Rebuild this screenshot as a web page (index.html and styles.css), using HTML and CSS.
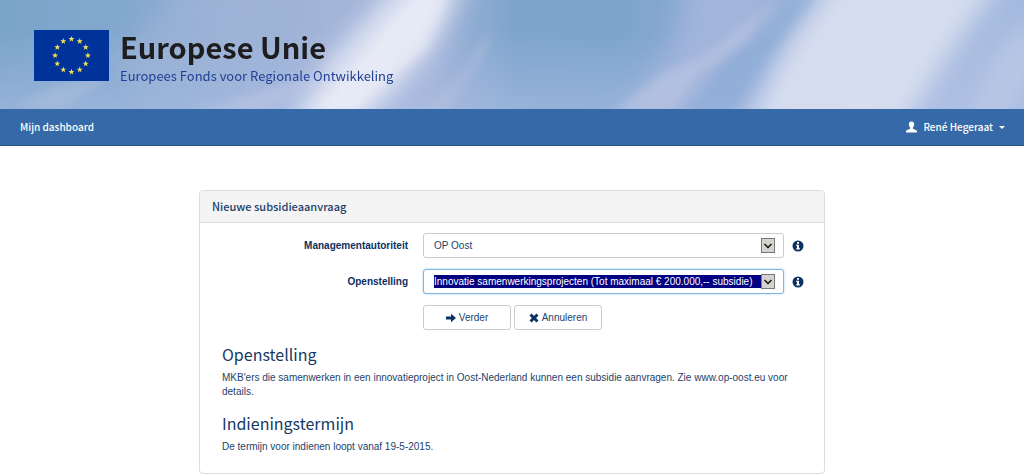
FILE: index.html
```html
<!DOCTYPE html>
<html lang="nl">
<head>
<meta charset="utf-8">
<meta name="viewport" content="width=device-width, initial-scale=1">
<title>Nieuwe subsidieaanvraag</title>
<link rel="stylesheet" href="styles.css">
</head>
<body>
<header class="banner">
  <svg class="sky" viewBox="0 0 1024 109" preserveAspectRatio="none" aria-hidden="true">
    <defs>
      <linearGradient id="base" x1="0" x2="1" y1="0" y2="0">
        <stop offset="0" stop-color="#7ba4c9"/>
        <stop offset=".12" stop-color="#83a8ce"/>
        <stop offset=".22" stop-color="#97b0d4"/>
        <stop offset=".32" stop-color="#a3b5d9"/>
        <stop offset=".42" stop-color="#a3b4d8"/>
        <stop offset=".5" stop-color="#7fa5cd"/>
        <stop offset=".6" stop-color="#7ca4cd"/>
        <stop offset=".7" stop-color="#8fabd5"/>
        <stop offset=".85" stop-color="#b3c3e2"/>
        <stop offset="1" stop-color="#a3b9df"/>
      </linearGradient>
      <linearGradient id="haze" x1="0" x2="0" y1="0" y2="1">
        <stop offset=".3" stop-color="#b0c0e6" stop-opacity="0"/>
        <stop offset="1" stop-color="#b0c0e6" stop-opacity=".5"/>
      </linearGradient>
      <filter id="soft" x="-50%" y="-50%" width="200%" height="200%"><feGaussianBlur stdDeviation="12"/></filter>
      <filter id="fine" x="-50%" y="-50%" width="200%" height="200%"><feGaussianBlur stdDeviation="5"/></filter>
    </defs>
    <rect width="1024" height="109" fill="url(#base)"/>
    <rect width="1024" height="109" fill="url(#haze)"/>
    <g filter="url(#soft)">
      <path d="M195-20H290L250 50 150 90 110 60Z" fill="#a5b6d9" opacity=".45"/>
      <path d="M400-20H465L438 40 400 85 355 130H285L330 60Z" fill="#e0e5f3" opacity=".95"/>
      <path d="M690-20H775L745 40 680 125H605L670 60Z" fill="#a9b8de" opacity=".75"/>
      <path d="M835-20H1000L950 50 900 130H745L785 50Z" fill="#d6ddef"/>
      <path d="M1035 10V70L1000 125H965L1000 50Z" fill="#b9c7e5"/>
    </g>
    <g filter="url(#fine)">
      <path d="M415-5H448L425 50 395 75 355 112H312L350 70Z" fill="#f0f2f9" opacity=".5"/>
      <path d="M494 22 484 55 445 112H425L465 70Z" fill="#b9c3df" opacity=".4"/>
      <path d="M775 0 745 42 698 75 670 112H615L660 75 705 55Z" fill="#c2cae6" opacity=".5"/>
      <path d="M787-5 768 30 728 60 685 112H735L770 55 815-5Z" fill="#86a9d5" opacity=".5"/>
      <path d="M15 105 60 85 110 75 60 112Z" fill="#b3c3df" opacity=".4"/>
      <path d="M195 112 280 86 335 75 260 112Z" fill="#c5cde6" opacity=".4"/>
    </g>
  </svg>
  <div class="brand">
    <svg class="flag" viewBox="0 0 75 51" role="img" aria-label="Vlag van de Europese Unie">
      <defs><path id="star" d="M0-3.200.75-1H3.050L1.200.38 1.900 2.580 0 1.240-1.900 2.580-1.200.38-3.050-1H-.75Z"/></defs>
      <rect width="75" height="51" fill="#039"/>
      <g fill="#ece35a">
        <use href="#star" x="37.5" y="9.1"/><use href="#star" x="45.7" y="11.3"/>
        <use href="#star" x="51.7" y="17.3"/><use href="#star" x="53.9" y="25.5"/>
        <use href="#star" x="51.7" y="33.7"/><use href="#star" x="45.7" y="39.7"/>
        <use href="#star" x="37.5" y="41.9"/><use href="#star" x="29.3" y="39.7"/>
        <use href="#star" x="23.3" y="33.7"/><use href="#star" x="21.1" y="25.5"/>
        <use href="#star" x="23.3" y="17.3"/><use href="#star" x="29.3" y="11.3"/>
      </g>
    </svg>
    <div class="brand-text">
      <div class="brand-name">Europese Unie</div>
      <div class="brand-fund">Europees Fonds voor Regionale Ontwikkeling</div>
    </div>
  </div>
</header>
<nav class="navbar">
  <a class="nav-link" href="#">Mijn dashboard</a>
  <a class="nav-link user" href="#">
    <svg class="user-icon" viewBox="0 0 12 12" aria-hidden="true"><path d="M6 0C3.900 0 3.100 1.300 3.100 3.100 3.100 4.700 3.700 5.700 4.500 6.500V8L1.300 9.300C.4 9.700 0 10.200 0 11V12H12V11C12 10.200 11.600 9.700 10.700 9.300L7.500 8V6.500C8.300 5.700 8.900 4.700 8.900 3.100 8.900 1.300 8.100 0 6 0Z" fill="currentColor"/></svg>
    <span>René Hegeraat</span>
    <span class="caret"></span>
  </a>
</nav>
<main class="panel">
  <h1 class="panel-title">Nieuwe subsidieaanvraag</h1>
  <div class="panel-body">
    <form class="form">
      <label class="label" for="authority">Managementautoriteit</label>
      <div class="picker">
        <select class="select" id="authority"><option>OP Oost</option></select>
        <svg class="arrow" viewBox="0 0 14 15" aria-hidden="true"><path d="M0 0H14V15H0Z" fill="#777"/><path d="M1 1H13V14H1Z" fill="#d6d3ce"/><path d="M3.500 6 7 9.500 10.500 6" fill="none" stroke="#111" stroke-width="1.500"/></svg>
      </div>
      <button class="info" type="button" aria-label="Informatie over managementautoriteit"><svg viewBox="0 0 12 12" aria-hidden="true"><circle cx="6" cy="6" r="5.500" fill="currentColor"/><path d="M5 2H7V3.800H5ZM4.200 4.700H7V8.300H7.900V9.600H4.200V8.300H5V6H4.200Z" fill="#fff"/></svg></button>

      <label class="label" for="call">Openstelling</label>
      <div class="picker">
        <select class="select selected" id="call"><option>Innovatie samenwerkingsprojecten (Tot maximaal € 200.000,-- subsidie)</option></select>
        <svg class="arrow" viewBox="0 0 14 15" aria-hidden="true"><path d="M0 0H14V15H0Z" fill="#777"/><path d="M1 1H13V14H1Z" fill="#d6d3ce"/><path d="M3.500 6 7 9.500 10.500 6" fill="none" stroke="#111" stroke-width="1.500"/></svg>
      </div>
      <button class="info" type="button" aria-label="Informatie over openstelling"><svg viewBox="0 0 12 12" aria-hidden="true"><circle cx="6" cy="6" r="5.500" fill="currentColor"/><path d="M5 2H7V3.800H5ZM4.200 4.700H7V8.300H7.900V9.600H4.200V8.300H5V6H4.200Z" fill="#fff"/></svg></button>

      <div class="actions">
        <button class="button" type="submit"><svg class="icon" viewBox="0 0 10 10" aria-hidden="true"><path d="M0 3.500H5V.8L10 5 5 9.200V6.500H0Z" fill="currentColor"/></svg>Verder</button>
        <button class="button" type="button"><svg class="icon" viewBox="0 0 10 10" aria-hidden="true"><path d="M2.600.5 5 2.900 7.400.5 9.500 2.600 7.100 5 9.500 7.400 7.400 9.500 5 7.100 2.600 9.500.5 7.400 2.900 5 .5 2.600Z" fill="currentColor"/></svg>Annuleren</button>
      </div>
    </form>
    <section class="topic">
      <h2 class="topic-title">Openstelling</h2>
      <p class="topic-text">MKB'ers die samenwerken in een innovatieproject in Oost-Nederland kunnen een subsidie aanvragen. Zie www.op-oost.eu voor details.</p>
    </section>
    <section class="topic">
      <h2 class="topic-title">Indieningstermijn</h2>
      <p class="topic-text">De termijn voor indienen loopt vanaf 19-5-2015.</p>
    </section>
  </div>
</main>
</body>
</html>
```
FILE: styles.css
```css
* { box-sizing: border-box; }

body {
  margin: 0;
  background: #fff;
  color: #1c3f6b;
  font: 10px/14px "Liberation Sans", Arial, sans-serif;
}

.banner {
  position: relative;
  padding: 30px 34px 19px;
  overflow: hidden;
}

.sky {
  position: absolute;
  inset: 0;
  width: 100%;
  height: 100%;
}

.brand {
  position: relative;
  display: flex;
  gap: 11px;
}

.flag { width: 75px; height: 51px; }

.brand-text { font-family: "Noto Sans CJK JP", "Noto Sans", sans-serif; }

.brand-name {
  color: #1d1d1f;
  font-size: 29px;
  font-weight: 700;
  line-height: 32px;
}

.brand-fund {
  color: #1f3f94;
  font-size: 13px;
  line-height: 28px;
}

.navbar {
  display: flex;
  justify-content: space-between;
  align-items: center;
  padding: 8px 19px 8px 20px;
  background: #3569a8;
  border-bottom: 1px solid #2b5688;
}

.nav-link {
  color: #fff;
  font: 500 10px/20px "Noto Sans CJK JP", "Noto Sans", sans-serif;
  text-decoration: none;
}

.user { display: flex; align-items: center; gap: 6px; }

.user-icon { width: 11px; height: 12px; }

.caret {
  border: 3px solid transparent;
  border-top-color: currentColor;
  border-bottom: 0;
}

.panel {
  max-width: 626px;
  margin: 44px auto 0;
  border: 1px solid #ddd;
  border-radius: 4px;
  box-shadow: 0 1px 1px rgba(0, 0, 0, .05);
}

.panel-title {
  margin: 0;
  padding: 5px 12px 6px;
  background: #f4f4f4;
  border-bottom: 1px solid #ddd;
  border-radius: 3px 3px 0 0;
  font: 500 11px/20px "Noto Sans CJK JP", "Noto Sans", sans-serif;
}

.panel-body { padding: 10px 20px 6px 22px; }

.form {
  display: grid;
  grid-template-columns: minmax(0, 193fr) minmax(0, 361fr) 12px;
  gap: 11px 8px;
  align-items: center;
  margin-bottom: 13px;
}

.label {
  padding-right: 7px;
  color: #0b2f60;
  font-weight: 700;
  text-align: right;
}

.picker { position: relative; display: flex; }

.select {
  width: 100%;
  height: 25px;
  padding: 5px 22px 5px 10px;
  appearance: none;
  background: #fff;
  border: 1px solid #ccc;
  border-radius: 3px;
  color: inherit;
  font: inherit;
}

.selected {
  background: linear-gradient(#000080, #000080) content-box no-repeat, #fff;
  border-color: #7db4e0;
  box-shadow: 0 0 3px #b5d8f0;
  color: #fff;
}

.arrow {
  position: absolute;
  top: 5px;
  right: 9px;
  width: 14px;
  height: 15px;
  pointer-events: none;
}

.info {
  width: 12px;
  height: 12px;
  padding: 0;
  background: none;
  border: 0;
  color: #0b3262;
}

.info svg { display: block; }

.actions { grid-column: 2; display: flex; gap: 3px; }

.button {
  display: flex;
  justify-content: center;
  align-items: center;
  gap: 3px;
  width: 88px;
  height: 25px;
  padding: 0;
  background: #fff;
  border: 1px solid #ccc;
  border-radius: 3px;
  color: inherit;
  font: inherit;
}

.icon { width: 10px; height: 10px; color: #0b3262; }

.topic { margin-bottom: 13px; }

.topic-title {
  margin: 0 0 6px;
  color: #163963;
  font: 400 16px/22px "Noto Sans CJK JP", "Noto Sans", sans-serif;
}

.topic-text { margin: 0; }
```
